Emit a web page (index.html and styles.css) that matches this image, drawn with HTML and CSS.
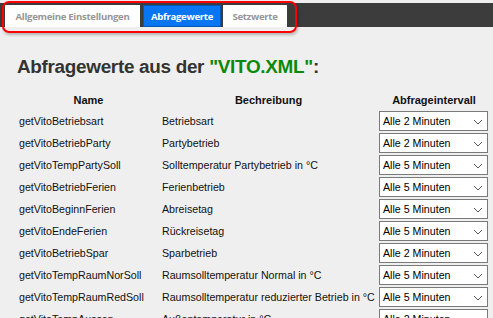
FILE: index.html
```html
<!DOCTYPE html>
<html lang="de">
<head>
<meta charset="utf-8">
<title>Abfragewerte</title>
<link rel="stylesheet" href="styles.css">
</head>
<body>
<div class="topbar">
  <nav class="tabs">
    <a class="tab tab-general">Allgemeine Einstellungen</a>
    <a class="tab tab-active">Abfragewerte</a>
    <a class="tab tab-set">Setzwerte</a>
  </nav>
  <div class="marker"></div>
</div>
<main class="content">
  <h1 class="title">Abfragewerte aus der <span class="file">"VITO.XML"</span>:</h1>
  <table class="values">
    <colgroup><col class="c-name"><col class="c-desc"><col class="c-int"></colgroup>
    <thead>
      <tr><th>Name</th><th>Bechreibung</th><th>Abfrageintervall</th></tr>
    </thead>
    <tbody>
      <tr><td>getVitoBetriebsart</td><td>Betriebsart</td><td><div class="sel"><span>Alle 2 Minuten</span><svg class="chev" viewBox="0 0 10 6" width="10" height="6"><path d="M1 1 L5 5 L9 1" fill="none" stroke="#5a5a5a" stroke-width="1"/></svg></div></td></tr>
      <tr><td>getVitoBetriebParty</td><td>Partybetrieb</td><td><div class="sel"><span>Alle 2 Minuten</span><svg class="chev" viewBox="0 0 10 6" width="10" height="6"><path d="M1 1 L5 5 L9 1" fill="none" stroke="#5a5a5a" stroke-width="1"/></svg></div></td></tr>
      <tr><td>getVitoTempPartySoll</td><td>Solltemperatur Partybetrieb in °C</td><td><div class="sel"><span>Alle 5 Minuten</span><svg class="chev" viewBox="0 0 10 6" width="10" height="6"><path d="M1 1 L5 5 L9 1" fill="none" stroke="#5a5a5a" stroke-width="1"/></svg></div></td></tr>
      <tr><td>getVitoBetriebFerien</td><td>Ferienbetrieb</td><td><div class="sel"><span>Alle 5 Minuten</span><svg class="chev" viewBox="0 0 10 6" width="10" height="6"><path d="M1 1 L5 5 L9 1" fill="none" stroke="#5a5a5a" stroke-width="1"/></svg></div></td></tr>
      <tr><td>getVitoBeginnFerien</td><td>Abreisetag</td><td><div class="sel"><span>Alle 5 Minuten</span><svg class="chev" viewBox="0 0 10 6" width="10" height="6"><path d="M1 1 L5 5 L9 1" fill="none" stroke="#5a5a5a" stroke-width="1"/></svg></div></td></tr>
      <tr><td>getVitoEndeFerien</td><td>Rückreisetag</td><td><div class="sel"><span>Alle 5 Minuten</span><svg class="chev" viewBox="0 0 10 6" width="10" height="6"><path d="M1 1 L5 5 L9 1" fill="none" stroke="#5a5a5a" stroke-width="1"/></svg></div></td></tr>
      <tr><td>getVitoBetriebSpar</td><td>Sparbetrieb</td><td><div class="sel"><span>Alle 2 Minuten</span><svg class="chev" viewBox="0 0 10 6" width="10" height="6"><path d="M1 1 L5 5 L9 1" fill="none" stroke="#5a5a5a" stroke-width="1"/></svg></div></td></tr>
      <tr><td>getVitoTempRaumNorSoll</td><td>Raumsolltemperatur Normal in °C</td><td><div class="sel"><span>Alle 5 Minuten</span><svg class="chev" viewBox="0 0 10 6" width="10" height="6"><path d="M1 1 L5 5 L9 1" fill="none" stroke="#5a5a5a" stroke-width="1"/></svg></div></td></tr>
      <tr><td>getVitoTempRaumRedSoll</td><td>Raumsolltemperatur reduzierter Betrieb in °C</td><td><div class="sel"><span>Alle 5 Minuten</span><svg class="chev" viewBox="0 0 10 6" width="10" height="6"><path d="M1 1 L5 5 L9 1" fill="none" stroke="#5a5a5a" stroke-width="1"/></svg></div></td></tr>
      <tr><td>getVitoTempAussen</td><td>Außentemperatur in °C</td><td><div class="sel"><span>Alle 2 Minuten</span><svg class="chev" viewBox="0 0 10 6" width="10" height="6"><path d="M1 1 L5 5 L9 1" fill="none" stroke="#5a5a5a" stroke-width="1"/></svg></div></td></tr>
    </tbody>
  </table>
</main>
</body>
</html>
```
FILE: styles.css
```css
html, body {
  margin: 0;
  padding: 0;
  overflow: hidden;
  background: #efefef;
  font-family: "Liberation Sans", Arial, sans-serif;
  color: #111;
}

.topbar {
  position: relative;
  margin-top: 3px;
  height: 24px;
  background: #3c3c3c;
}

.tabs {
  display: flex;
  padding: 2px 0 0 5px;
  height: 22px;
}

.tab {
  display: flex;
  align-items: center;
  justify-content: center;
  box-sizing: border-box;
  height: 22px;
  background: #fff;
  color: #969696;
  font-family: "Open Sans", "Liberation Sans", sans-serif;
  font-weight: 700;
  font-size: 9.6px;
  letter-spacing: -0.3px;
  cursor: pointer;
}

.tab-general { width: 135px; margin-right: 3px; }
.tab-active {
  width: 78px;
  margin-right: 2px;
  background: #0875f2;
  border: 1px solid #0a55b5;
  color: #fff;
}
.tab-set { width: 64px; }

.marker {
  position: absolute;
  left: 2px;
  top: -2px;
  width: 295px;
  height: 32px;
  box-sizing: border-box;
  border: 2px solid #ff0000;
  border-radius: 7px;
  box-shadow: 1px 2px 3px rgba(0,0,0,0.25);
  pointer-events: none;
}

.content {
  padding-left: 17px;
}

.title {
  margin: 27px 0 10px 0;
  font-size: 18.9px;
  line-height: 26px;
  letter-spacing: -0.3px;
  font-weight: bold;
  color: #333;
}

.file {
  color: #0a8a0a;
}

.values {
  table-layout: fixed;
  border-collapse: collapse;
  width: 474px;
  font-size: 10.67px;
}

.c-name { width: 143px; }
.c-desc { width: 217px; }
.c-int { width: 114px; }

.values th {
  height: 20px;
  padding: 0 2px;
  font-size: 11px;
  font-weight: bold;
  text-align: center;
  color: #111;
}

.values td {
  height: 22px;
  padding: 0 2px;
  white-space: nowrap;
  vertical-align: middle;
  color: #111;
}

.sel {
  position: relative;
  display: flex;
  align-items: center;
  box-sizing: border-box;
  width: 109px;
  height: 20px;
  padding-left: 3px;
  background: #fff;
  border: 1px solid #7a7a7a;
  color: #000;
}

.chev {
  position: absolute;
  right: 4px;
  top: 7px;
}
```
